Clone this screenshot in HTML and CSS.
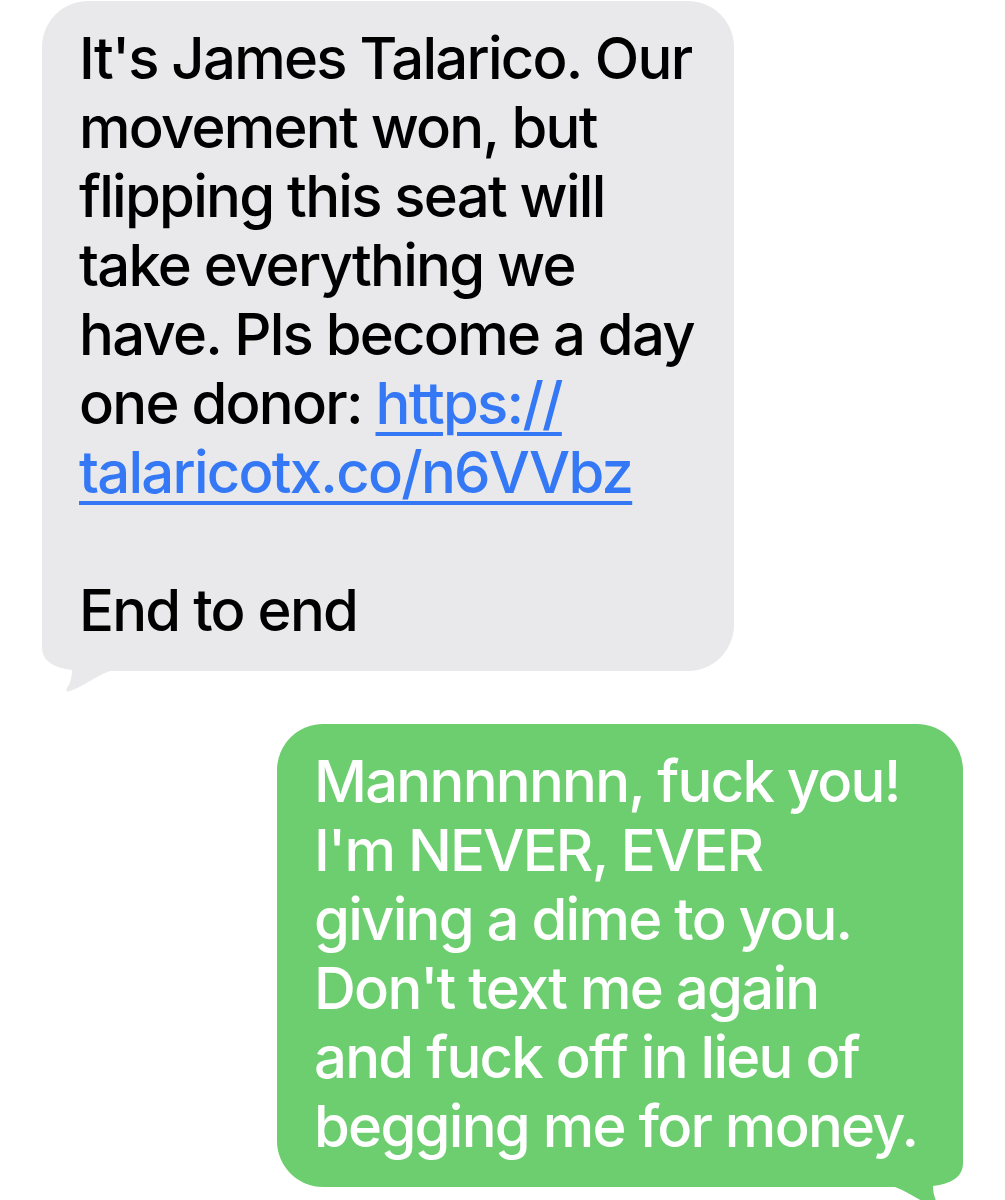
FILE: index.html
```html
<!DOCTYPE html>
<html lang="en">
<head>
<meta charset="utf-8">
<title>Messages</title>
<link rel="stylesheet" href="styles.css">
</head>
<body>
<main class="thread">
  <div class="bubble received">
    <svg class="tail tail-left" viewBox="0 0 70 66" aria-hidden="true"><path d="M0,0 L0,22 C0,36 12,43 30,45 C30,52 28,59 25,63 C23,66 25,67 28,66 C42,61 54,51 68,46 L68,0 Z"/></svg>
    <p class="text">It's James Talarico. Our<br>movement won, but<br>flipping this seat will<br>take everything we<br>have. Pls become a day<br>one donor: <a class="link" href="#">https://</a><br><a class="link" href="#">talaricotx.co/n6VVbz</a><br><br>End to end</p>
  </div>
  <div class="bubble sent">
    <svg class="tail tail-right" viewBox="0 0 70 66" aria-hidden="true"><path d="M0,0 L0,22 C0,36 12,43 30,45 C30,52 28,59 25,63 C23,66 25,67 28,66 C42,61 54,51 68,46 L68,0 Z"/></svg>
    <p class="text">Mannnnnnn, fuck you!<br>I'm NEVER, EVER<br>giving a dime to you.<br>Don't text me again<br>and fuck off in lieu of<br>begging me for money.</p>
  </div>
</main>
</body>
</html>
```
FILE: styles.css
```css
html, body {
  margin: 0;
  padding: 0;
  background: #ffffff;
}

body {
  font-family: "Inter", "Noto Sans", "Liberation Sans", sans-serif;
  -webkit-font-smoothing: antialiased;
  overflow: hidden;
  height: 1200px;
}

.thread {
  display: flex;
  flex-direction: column;
  padding-top: 1px;
}

.bubble {
  position: relative;
  box-sizing: border-box;
  padding: 23px 37px 26px;
  border-radius: 46px;
}

.text {
  position: relative;
  z-index: 1;
  margin: 0;
  font-size: 58px;
  line-height: 69px;
  font-weight: 500;
  letter-spacing: -1.75px;
  white-space: nowrap;
}

.received {
  align-self: flex-start;
  margin-left: 42px;
  width: 692px;
  background: #e9e9eb;
  color: #000000;
}

.sent {
  align-self: flex-end;
  margin-right: 42px;
  margin-top: 53px;
  width: 686px;
  background: #6dce6f;
  color: #ffffff;
}

.link {
  color: #3478f6;
  text-decoration: underline;
  text-decoration-thickness: 4px;
  text-underline-offset: 8px;
}

.tail {
  position: absolute;
  z-index: 0;
  bottom: -20px;
  width: 70px;
  height: 66px;
  overflow: visible;
}

.tail-left {
  left: 0;
  fill: #e9e9eb;
}

.tail-right {
  right: 0;
  fill: #6dce6f;
  transform: scaleX(-1);
}
```
